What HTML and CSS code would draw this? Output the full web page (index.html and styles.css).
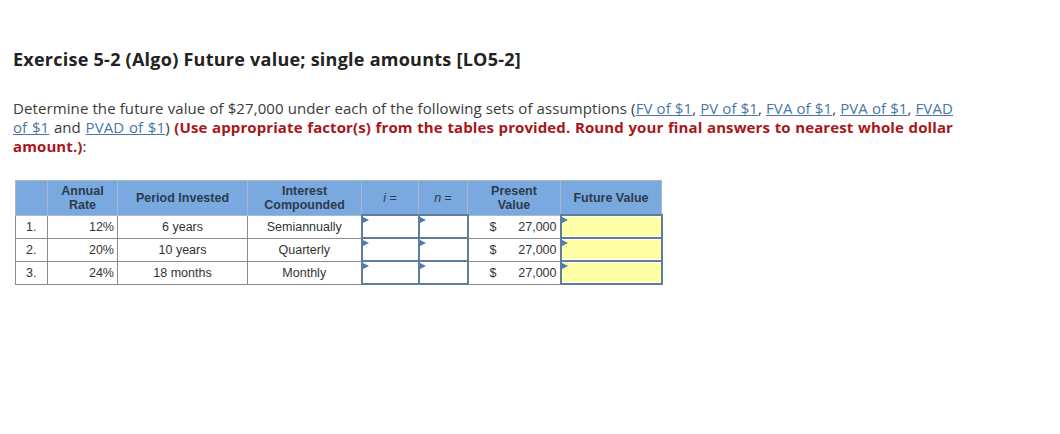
FILE: index.html
```html
<!DOCTYPE html>
<html>
<head>
<meta charset="utf-8">
<link rel="stylesheet" href="styles.css">
</head>
<body>
<div class="page">
  <h1 class="title">Exercise 5-2 (Algo) Future value; single amounts [LO5-2]</h1>
  <p class="prompt">Determine the future value of $27,000 under each of the following sets of assumptions (<a href="#">FV of $1</a>, <a href="#">PV of $1</a>, <a href="#">FVA of $1</a>, <a href="#">PVA of $1</a>, <a href="#">FVAD</a> <a href="#">of $1</a> and <a href="#">PVAD of $1</a>) <b class="note">(Use appropriate factor(s) from the tables provided. Round your final answers to nearest whole dollar</b> <b class="note">amount.)</b>:</p>
  <table class="grid">
    <colgroup>
      <col class="c-num"><col class="c-rate"><col class="c-period"><col class="c-int"><col class="c-i"><col class="c-n"><col class="c-pv"><col class="c-fv">
    </colgroup>
    <thead>
      <tr>
        <th></th>
        <th>Annual<br>Rate</th>
        <th>Period Invested</th>
        <th>Interest<br>Compounded</th>
        <th class="it"><i>i</i> =</th>
        <th class="it"><i>n</i> =</th>
        <th>Present<br>Value</th>
        <th>Future Value</th>
      </tr>
    </thead>
    <tbody>
      <tr>
        <td class="num">1.</td><td class="rate">12%</td><td class="ctr">6 years</td><td class="ctr">Semiannually</td>
        <td class="inp"><div class="box"></div></td><td class="inp"><div class="box"></div></td>
        <td class="pv"><span>$</span><span>27,000</span></td><td class="inp"><div class="box yel"></div></td>
      </tr>
      <tr>
        <td class="num">2.</td><td class="rate">20%</td><td class="ctr">10 years</td><td class="ctr">Quarterly</td>
        <td class="inp"><div class="box"></div></td><td class="inp"><div class="box"></div></td>
        <td class="pv"><span>$</span><span>27,000</span></td><td class="inp"><div class="box yel"></div></td>
      </tr>
      <tr>
        <td class="num">3.</td><td class="rate">24%</td><td class="ctr">18 months</td><td class="ctr">Monthly</td>
        <td class="inp"><div class="box"></div></td><td class="inp"><div class="box"></div></td>
        <td class="pv"><span>$</span><span>27,000</span></td><td class="inp"><div class="box yel"></div></td>
      </tr>
    </tbody>
  </table>
</div>
</body>
</html>
```
FILE: styles.css
```css
html, body {
  margin: 0;
  padding: 0;
  background: #ffffff;
}
.page {
  padding: 47px 0 0 13px;
  font-family: "Open Sans", Lato, sans-serif;
  color: #333333;
}
.title {
  margin: 0;
  font-size: 18px;
  font-weight: 700;
  line-height: 24px;
  letter-spacing: 0.25px;
  color: #222222;
}
.prompt {
  margin: 28px 0 0 0;
  width: 940px;
  font-size: 15px;
  line-height: 19px;
  letter-spacing: 0.1px;
  text-align: justify;
  color: #3a3a3a;
}
.prompt a {
  color: #4a76a8;
  text-decoration: underline;
}
.note {
  color: #a8161c;
  font-weight: 700;
}
.grid {
  margin: 24px 0 0 2px;
  border-collapse: collapse;
  font-family: "Liberation Sans", Arial, sans-serif;
  font-size: 12.5px;
  color: #333333;
}
.c-num { width: 32px; }
.c-rate { width: 70px; }
.c-period { width: 130px; }
.c-int { width: 114px; }
.c-i { width: 57px; }
.c-n { width: 49px; }
.c-pv { width: 93px; }
.c-fv { width: 101px; }
.grid th {
  background: #7aa9e0;
  border: 1px solid #a8b8c8;
  height: 33px;
  padding: 0 3px;
  font-weight: 700;
  line-height: 14px;
  color: #2d3b4a;
}
.grid th.it {
  font-weight: 400;
}
.grid td {
  border: 1px solid #8c8c8c;
  height: 21px;
  padding: 0 3px;
}
.grid td.num { text-align: left; padding-left: 10px; }
.grid td.rate { text-align: right; }
.grid td.ctr { text-align: center; }
.grid td.pv {
  padding: 0 3px 0 21px;
}
.grid td.pv span:first-child { float: left; }
.grid td.pv span:last-child { float: right; }
.grid td.inp {
  padding: 0;
  border: 2px solid #5e7e9c;
}
.box {
  height: 19px;
  background: #ffffff;
  position: relative;
}
.box.yel {
  background: #ffffa6;
}
.box::before {
  content: "";
  position: absolute;
  left: 0;
  top: 0;
  border-left: 6px solid #4a7ab8;
  border-top: 3px solid transparent;
  border-bottom: 3px solid transparent;
}
```
